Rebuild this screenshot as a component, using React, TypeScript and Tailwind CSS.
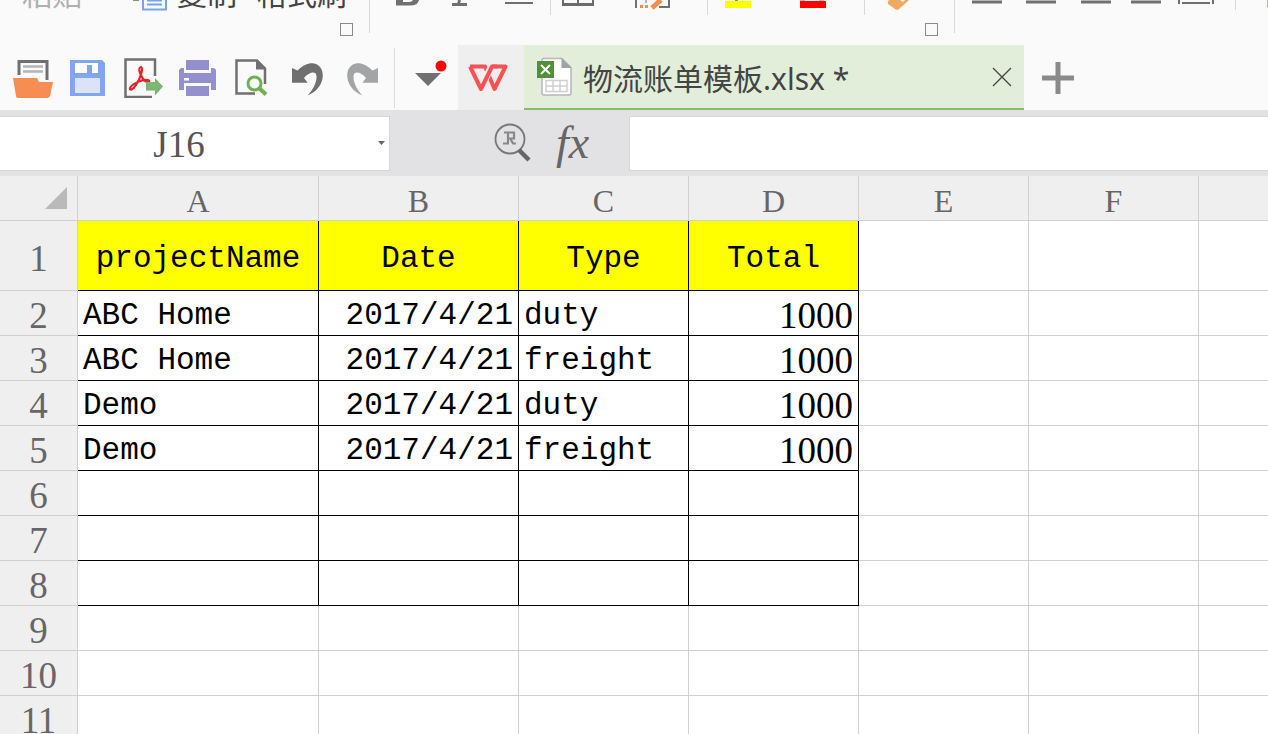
import type { ReactNode } from "react";

const UI_FONT = "font-['Noto_Sans','Noto_Sans_CJK_SC',sans-serif]";
const MONO_FONT = "font-['Liberation_Mono','Noto_Sans_CJK_SC',monospace]";
const SERIF_FONT = "font-['Liberation_Serif','Noto_Sans_CJK_SC',serif]";

const columns = [
  { name: "A", width: "w-[241px]" },
  { name: "B", width: "w-[200px]" },
  { name: "C", width: "w-[170px]" },
  { name: "D", width: "w-[170px]" },
  { name: "E", width: "w-[170px]" },
  { name: "F", width: "w-[170px]" },
  { name: "", width: "" },
];

const rows: string[][] = [
  ["projectName", "Date", "Type", "Total"],
  ["ABC Home", "2017/4/21", "duty", "1000"],
  ["ABC Home", "2017/4/21", "freight", "1000"],
  ["Demo", "2017/4/21", "duty", "1000"],
  ["Demo", "2017/4/21", "freight", "1000"],
  [],
  [],
  [],
  [],
  [],
  [],
];

// Last row and last column of the area with black borders
const BORDERED_ROWS = 8;
const BORDERED_COLS = 4;

const ARROW_PATH =
  "M4 10L9.500 12.500C15 7 20 5 25 5.300C31 6 35 11 34.800 18C34.500 27 28 34 19.600 37.500C25 32 29 24 28.500 18C28 12.500 21 14 16 20L19.600 24.700H4Z";

interface ToolButtonProps {
  label: string;
  children: ReactNode;
}

function ToolButton({ label, children }: ToolButtonProps) {
  return (
    <button type="button" aria-label={label} className="shrink-0">
      <svg width="40" height="40" viewBox="0 0 40 40" fill="none">
        {children}
      </svg>
    </button>
  );
}

interface RibbonIconProps {
  label: string;
  width: number;
  className: string;
  children: ReactNode;
}

function RibbonIcon({ label, width, className, children }: RibbonIconProps) {
  return (
    <button type="button" aria-label={label} className={`shrink-0 ${className}`}>
      <svg width={width} height="12" viewBox={`0 0 ${width} 12`} fill="none">
        {children}
      </svg>
    </button>
  );
}

function Launcher({ label }: { label: string }) {
  return (
    <button
      type="button"
      aria-label={label}
      className="mr-4 size-[13px] shrink-0 self-end border border-[#8a8a8a]"
    />
  );
}

function Ribbon() {
  return (
    <header className={`flex h-[45px] items-start overflow-hidden ${UI_FONT}`}>
      <div className="flex h-[33px] w-[370px] shrink-0 flex-col border-r border-[#d9d9d9]">
        <div className="flex h-[23px] shrink-0 items-start">
          <button type="button" className="-mt-[21px] ml-[22px] text-[30px] leading-[30px] text-[#b0b0b0]">
            粘贴
          </button>
          <RibbonIcon label="剪切" width={36} className="ml-[50px]">
            <path d="M1 0h6" stroke="#8a8a8a" strokeWidth="2" />
            <path d="M11 0v9.500h23V0" fill="#f6f9ff" stroke="#7ba3ec" strokeWidth="2" />
            <path d="M15 0.500h15M15 4.500h15" stroke="#7ba3ec" strokeWidth="2" />
          </RibbonIcon>
          <button type="button" className="-mt-[21px] ml-[9px] text-[30px] leading-[30px] text-[#444]">
            复制
          </button>
          <button type="button" className="-mt-[21px] ml-5 text-[30px] leading-[30px] text-[#444]">
            格式刷
          </button>
        </div>
        <Launcher label="剪贴板设置" />
      </div>

      <div className="flex h-[33px] w-[585px] shrink-0 flex-col border-r border-[#d9d9d9]">
        <div className="flex h-[23px] shrink-0 items-start">
          <RibbonIcon label="加粗" width={24} className="ml-[26px]">
            <path d="M0 5.500V0h7v2h6q3 0 4-2h6q-1 5.500-9 5.500z" fill="#707070" />
          </RibbonIcon>
          <RibbonIcon label="倾斜" width={18} className="ml-[32px]">
            <path d="M0 4.500h15M6.500 4l1-4" stroke="#707070" strokeWidth="3" />
          </RibbonIcon>
          <RibbonIcon label="下划线" width={28} className="ml-[35px]">
            <path d="M0 3h28" stroke="#707070" strokeWidth="2" />
          </RibbonIcon>
          <div className="ml-[17px] h-[15px] w-px bg-[#d9d9d9]" />
          <RibbonIcon label="边框" width={34} className="ml-[11px]">
            <path d="M1 0v4.500h30V0M16 0v4" stroke="#6b6b6b" strokeWidth="2" />
            <path d="M0 4.500h32" stroke="#6b6b6b" strokeWidth="3" />
          </RibbonIcon>
          <RibbonIcon label="绘图边框" width={36} className="ml-[39px]">
            <path d="M1 0v8M34 0v7H24" stroke="#707070" strokeWidth="2" />
            <path d="M5 6.500h9" stroke="#f58b50" strokeWidth="3" strokeDasharray="3 2" />
            <path d="M11 0v3" stroke="#b4b4b4" strokeWidth="2" />
            <path d="M17 8l9-8" stroke="#f58b50" strokeWidth="5" />
          </RibbonIcon>
          <div className="ml-[36px] h-[15px] w-px bg-[#d9d9d9]" />
          <RibbonIcon label="填充颜色" width={27} className="ml-4">
            <path d="M1 1h26v7H1z" fill="#ff0" />
            <path d="M11 0h3" stroke="#8a8a8a" strokeWidth="2" />
          </RibbonIcon>
          <RibbonIcon label="字体颜色" width={27} className="ml-12">
            <path d="M1 1h26v7H1z" fill="#f00" />
            <path d="M1 0h5M20 0h5" stroke="#8a6a6a" strokeWidth="1" />
          </RibbonIcon>
          <div className="ml-[38px] h-[15px] w-px bg-[#d9d9d9]" />
          <RibbonIcon label="清除" width={24} className="ml-[22px]">
            <path d="M2 0h20L12 9q-2 2-4 0L1 4q-1-2 1-4z" fill="#edaa62" />
            <path d="M13 0l3 2 2-2z" fill="#fff" />
          </RibbonIcon>
        </div>
        <Launcher label="字体设置" />
      </div>

      <div className="flex h-[23px] grow items-start">
        <RibbonIcon label="左对齐" width={30} className="ml-[17px]">
          <path d="M0 2h30" stroke="#707070" strokeWidth="3" />
        </RibbonIcon>
        <RibbonIcon label="居中" width={30} className="ml-6">
          <path d="M0 2h30" stroke="#707070" strokeWidth="3" />
        </RibbonIcon>
        <RibbonIcon label="右对齐" width={30} className="ml-[25px]">
          <path d="M0 2h30" stroke="#707070" strokeWidth="3" />
        </RibbonIcon>
        <RibbonIcon label="两端对齐" width={30} className="ml-5">
          <path d="M0 2h30" stroke="#707070" strokeWidth="3" />
        </RibbonIcon>
        <RibbonIcon label="分散对齐" width={38} className="ml-4">
          <path d="M2 0v4M36 0v4M5 3h28" stroke="#707070" strokeWidth="2" />
        </RibbonIcon>
        <div className="ml-5 h-[10px] w-px bg-[#d9d9d9]" />
        <RibbonIcon label="合并居中" width={30} className="ml-[31px]">
          <path d="M0 0h30v7H0z" fill="#edaa62" />
        </RibbonIcon>
      </div>
    </header>
  );
}

function Toolbar() {
  return (
    <div className="flex shrink-0 items-center">
      <div className="flex items-center gap-[15px] pl-[13px]">
        <ToolButton label="打开">
          <path d="M6 17V3.500h28V22" stroke="#707070" strokeWidth="3" />
          <path d="M10 8.500h20M10 13.500h20" stroke="#b4b4b4" strokeWidth="2.500" />
          <path d="M0 20h24l2 4h14l-3 14q-1 2-3 2H5q-2 0-2-2z" fill="#f68d52" />
        </ToolButton>
        <ToolButton label="保存">
          <path d="M2 2h32l3 3v33H2z" fill="#7fa6ee" />
          <path d="M7 5h23v10H7z" fill="#fff" />
          <path d="M19 7h5v8h-5z" fill="#7fa6ee" />
          <path d="M7 20h25v15H7z" fill="#dbe4f7" />
        </ToolButton>
        <ToolButton label="输出为PDF">
          <path d="M32 18V1.500H2.500V39H29" stroke="#707070" strokeWidth="2.500" />
          <path
            d="M18 9c-4 1 0 10 4 14 3 2 6 0 3-1-6-1-16 4-18 8-1 3 3 2 6-3 4-6 8-17 5-18z"
            stroke="#e0262d"
            strokeWidth="2.200"
          />
          <path d="M23 24h9v-4l8 8.500-8 9v-5h-9z" fill="#7cb670" />
        </ToolButton>
        <ToolButton label="打印">
          <path d="M8 2h23v10H8zM8 28h23v10H8z" fill="#9290ce" />
          <path d="M3 10h3v5h27v-5h3l2 2v20h-5v-7H6v7H1V12z" fill="#9290ce" />
          <path d="M6 20h5v2.500H6z" fill="#fff" />
        </ToolButton>
        <ToolButton label="打印预览">
          <path d="M22 35.500H3.500V2.500H24l8 8V26" stroke="#707070" strokeWidth="2.500" />
          <path d="M23 2l9.500 9.500H23z" fill="#707070" />
          <circle cx="21.500" cy="25.500" r="6.500" stroke="#72b055" strokeWidth="3" />
          <path d="M26 30l7 6.500" stroke="#72b055" strokeWidth="4" />
        </ToolButton>
        <ToolButton label="撤销">
          <path d={ARROW_PATH} fill="#707070" />
        </ToolButton>
        <ToolButton label="恢复">
          <path d={ARROW_PATH} fill="#a2a4a6" transform="translate(39 0) scale(-1 1)" />
        </ToolButton>
      </div>
      <div className="ml-[11px] h-[60px] w-px bg-[#dcdcdc]" />
      <button type="button" aria-label="自定义快速访问工具栏" className="ml-5 mr-[3px]">
        <svg width="40" height="40" viewBox="0 0 40 40">
          <path d="M0 15h26L13 28z" fill="#707070" />
          <circle cx="26" cy="8" r="5.500" fill="#f00" />
        </svg>
      </button>
    </div>
  );
}

function TabBar() {
  return (
    <div className={`flex h-[65px] ${UI_FONT}`}>
      <Toolbar />
      <button
        type="button"
        aria-label="WPS"
        className="flex w-[66px] shrink-0 items-center justify-center bg-[#efefef] pr-1.5"
      >
        <svg width="42" height="30" viewBox="0 0 42 30" fill="none" strokeWidth="4" strokeLinejoin="round">
          <path d="M3 3.500H18L27.500 26L38.500 3.500H25" stroke="#fb5155" />
          <path d="M17 18.500L24.500 3.500" stroke="#efefef" strokeWidth="7" />
          <path d="M3 3.500L14 26L25 3.500H30" stroke="#fb5155" />
        </svg>
      </button>
      <div className="flex w-[500px] shrink-0 items-center border-b-2 border-[#88ba70] bg-[#e2eed9] pl-[13px] pr-3">
        <svg className="shrink-0" width="36" height="40" viewBox="0 0 36 40" fill="none">
          <path d="M6.500 1.500H25l9 9V36q0 2-2 2H7q-2 0-2-2V3q0-1.500 1.500-1.500z" fill="#fff" stroke="#b5b7ba" strokeWidth="1.500" />
          <path d="M24.500 1l10 10h-10z" fill="#9fa2a6" />
          <path d="M9 23.500h21v11H9zM9 29h21M16 23v12M23 23v12" stroke="#cfcfcf" strokeWidth="1.500" />
          <path d="M0 4h17v17H0z" fill="#4f9136" />
          <path d="M4 8l9 9M13 8l-9 9" stroke="#fff" strokeWidth="2" />
        </svg>
        <span className="ml-2.5 grow pt-1 text-[30px] leading-10 whitespace-nowrap text-[#444]">
          物流账单模板.xlsx *
        </span>
        <button type="button" aria-label="关闭">
          <svg width="20" height="20" viewBox="0 0 20 20" fill="none">
            <path d="M1 1l18 18M19 1L1 19" stroke="#444" strokeWidth="1.300" />
          </svg>
        </button>
      </div>
      <button type="button" aria-label="新建" className="ml-[18px]">
        <svg width="32" height="32" viewBox="0 0 32 32" fill="none">
          <path d="M0 16h32M16 0v32" stroke="#8a8a8a" strokeWidth="5" />
        </svg>
      </button>
    </div>
  );
}

function FormulaBar() {
  return (
    <div className="flex h-[66px] items-center bg-[#e2e2e4]">
      <div className="flex h-[55px] w-[390px] shrink-0 items-center border border-l-0 border-[#d6d6d9] bg-white">
        <input
          aria-label="名称框"
          defaultValue="J16"
          className={`min-w-0 grow pt-1 pr-5 text-center text-[37px] leading-10 text-[#555] outline-none ${SERIF_FONT}`}
        />
        <button type="button" aria-label="展开名称框" className="mr-1">
          <svg width="7" height="4" viewBox="0 0 7 4">
            <path d="M0 0h7L3.500 4z" fill="#666" />
          </svg>
        </button>
      </div>
      <button type="button" aria-label="浏览公式结果" className="ml-[104px] shrink-0">
        <svg width="38" height="40" viewBox="0 0 38 40" fill="none">
          <circle cx="16" cy="16" r="14.500" stroke="#777" strokeWidth="1.800" />
          <path
            d="M10 9.500h10v6h-7M14 9v11M9 20.500h6M16 15l3 5.500h3"
            stroke="#888"
            strokeWidth="2.200"
          />
          <path d="M25 27l10 10" stroke="#666" strokeWidth="4.500" />
        </svg>
      </button>
      <button
        type="button"
        aria-label="插入函数"
        className={`ml-6 w-[42px] shrink-0 text-left text-[46px] leading-10 text-[#666] italic ${SERIF_FONT}`}
      >
        fx
      </button>
      <input
        aria-label="编辑栏"
        className="ml-[31px] h-[55px] min-w-0 grow border border-r-0 border-[#d6d6d9] bg-white outline-none"
      />
    </div>
  );
}

function cellClass(row: number, col: number) {
  const bordered = row < BORDERED_ROWS && col < BORDERED_COLS;
  const border = bordered ? "border-black" : "border-[#d0d0d0]";
  const fill = row === 0 && bordered ? "bg-[#ffff00]" : "bg-white";
  let align = "text-left";
  if (row === 0) align = "text-center";
  else if (col === 1 || col === 3) align = "text-right";
  const font = row > 0 && col === 3 ? `${SERIF_FONT} text-[37px]` : `${MONO_FONT} text-[31px]`;
  return `border-r border-b px-[5px] pt-1.5 pb-0 whitespace-nowrap text-black last:border-r-0 ${border} ${fill} ${align} ${font}`;
}

function Sheet() {
  return (
    <table className="w-full table-fixed border-separate border-spacing-0 leading-9">
      <thead>
        <tr className="h-[45px]">
          <th scope="col" className="w-[78px] border-r border-b border-[#d0d0d0] bg-[#efefef] p-0">
            <svg className="ml-[45px]" width="22" height="22" viewBox="0 0 22 22" role="img" aria-label="全选">
              <path d="M22 0v22H0z" fill="#bababa" />
            </svg>
          </th>
          {columns.map((col, i) => (
            <th
              key={i}
              scope="col"
              className={`border-r border-b border-[#d0d0d0] bg-[#efefef] px-0 pt-1.5 pb-0 text-[32px] font-normal text-[#666] last:border-r-0 ${SERIF_FONT} ${col.width}`}
            >
              {col.name}
            </th>
          ))}
        </tr>
      </thead>
      <tbody>
        {rows.map((cells, r) => (
          <tr key={r} className={r === 0 ? "h-[70px]" : "h-[45px]"}>
            <th
              scope="row"
              className={`border-r border-b border-[#d0d0d0] bg-[#efefef] px-0 pt-1.5 pb-0 text-[37px] font-normal text-[#666] ${SERIF_FONT}`}
            >
              {r + 1}
            </th>
            {columns.map((_, c) => (
              <td key={c} className={cellClass(r, c)}>
                {cells[c]}
              </td>
            ))}
          </tr>
        ))}
      </tbody>
    </table>
  );
}

export default function App() {
  return (
    <div className="h-screen overflow-hidden bg-[#fafafa]">
      <Ribbon />
      <TabBar />
      <FormulaBar />
      <Sheet />
    </div>
  );
}
